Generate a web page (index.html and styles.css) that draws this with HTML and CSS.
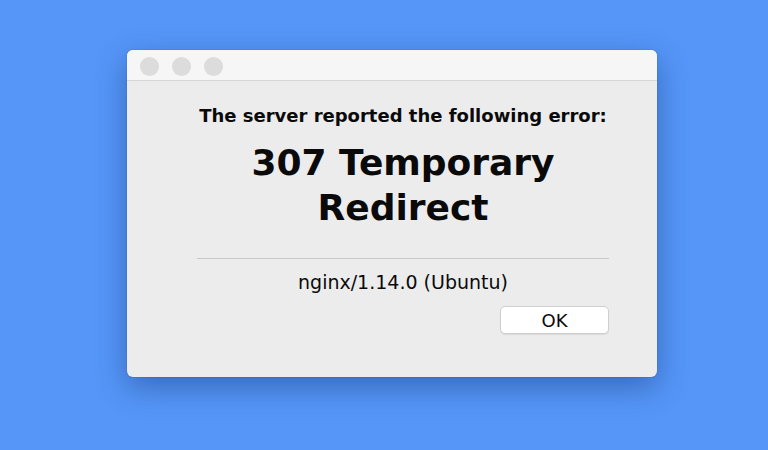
FILE: index.html
```html
<!DOCTYPE html>
<html>
<head lang="en">
    <meta charset="UTF-8">
    <title>307 Temporary Redirect</title>
    <link rel="stylesheet" href="styles.css">
</head>
<body>
<div class="window">
    <div class="titlebar">
        <span class="light"></span>
        <span class="light"></span>
        <span class="light"></span>
    </div>
    <div class="content">
        <p class="lead">The server reported the following error:</p>
        <h1 class="error">307 Temporary<br>Redirect</h1>
        <hr class="rule">
        <p class="server">nginx/1.14.0 (Ubuntu)</p>
        <div class="actions">
            <button class="ok">OK</button>
        </div>
    </div>
</div>
</body>
</html>
```

FILE: styles.css
```css
* {
    margin: 0;
    padding: 0;
    box-sizing: border-box;
}

html, body {
    height: 100%;
}

body {
    background: #5596f8;
    font-family: "DejaVu Sans", "Liberation Sans", sans-serif;
    color: #0a0a0a;
    padding: 50px 0 0 127px;
}

.window {
    width: 530px;
    height: 327px;
    background: #ececec;
    border-radius: 6px;
    overflow: hidden;
    box-shadow: 0 10px 30px rgba(20, 50, 110, 0.45), 0 0 0 1px rgba(0, 0, 0, 0.06);
}

.titlebar {
    height: 31px;
    background: #f6f6f6;
    border-bottom: 1px solid #d6d6d6;
    display: flex;
    align-items: center;
    gap: 13px;
    padding-left: 13px;
    padding-top: 2px;
}

.light {
    width: 19px;
    height: 19px;
    border-radius: 50%;
    background: #dcdcdc;
}

.content {
    margin-left: 70px;
    margin-right: 48px;
    padding-top: 24px;
    text-align: center;
}

.lead {
    font-size: 18px;
    font-weight: 700;
    line-height: 22px;
}

.error {
    margin-top: 13px;
    font-size: 36px;
    font-weight: 700;
    line-height: 45px;
}

.rule {
    margin-top: 28px;
    border: none;
    border-top: 1px solid #c8c8c8;
}

.server {
    margin-top: 12px;
    font-size: 19px;
    line-height: 22px;
}

.actions {
    margin-top: 13px;
    display: flex;
    justify-content: flex-end;
}

.ok {
    width: 109px;
    height: 28px;
    background: #ffffff;
    border: 1px solid #cfcfcf;
    border-radius: 5px;
    font-family: "DejaVu Sans", "Liberation Sans", sans-serif;
    font-size: 18px;
    color: #0a0a0a;
    box-shadow: 0 1px 1px rgba(0, 0, 0, 0.08);
}
```
